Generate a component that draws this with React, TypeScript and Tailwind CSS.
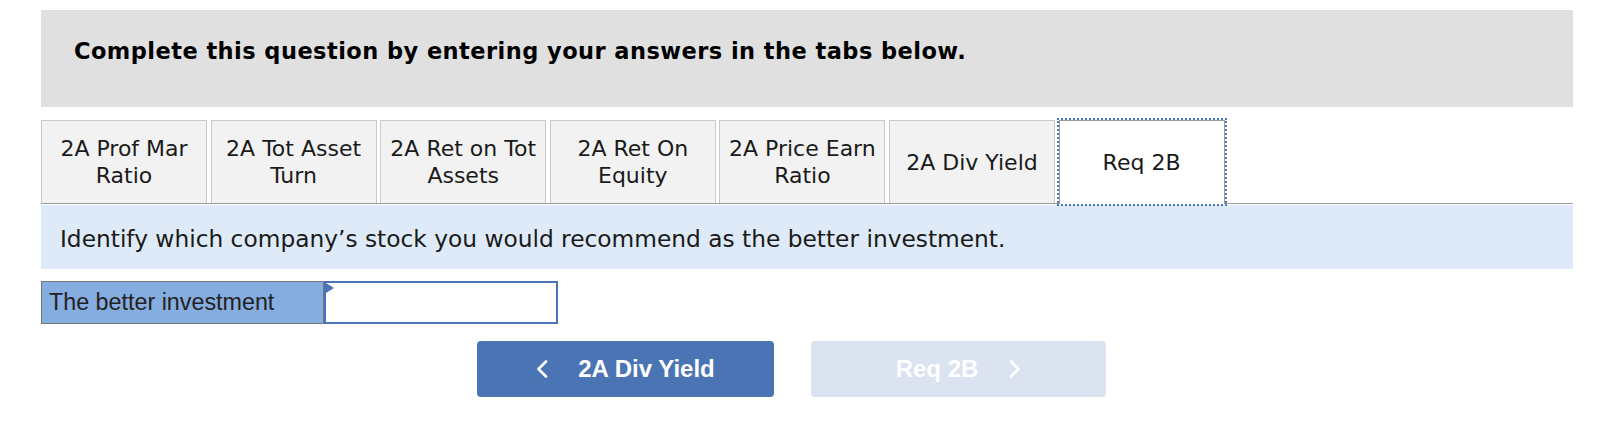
const tabs = [
  ["2A Prof Mar", "Ratio"],
  ["2A Tot Asset", "Turn"],
  ["2A Ret on Tot", "Assets"],
  ["2A Ret On", "Equity"],
  ["2A Price Earn", "Ratio"],
  ["2A Div Yield"],
]

const ChevronLeft = () => (
  <svg width="12" height="18" viewBox="0 0 12 18" fill="none">
    <polyline points="10,1.5 2.5,9 10,16.5" stroke="white" strokeWidth="2.6" strokeLinecap="round" strokeLinejoin="round" />
  </svg>
)

const ChevronRight = () => (
  <svg width="12" height="18" viewBox="0 0 12 18" fill="none">
    <polyline points="2,1.5 9.5,9 2,16.5" stroke="white" strokeWidth="2.6" strokeLinecap="round" strokeLinejoin="round" />
  </svg>
)

export default function App() {
  return (
    <div className="w-[1614px] h-[428px] bg-white pt-[10px] pl-[41px] font-['DejaVu_Sans',Verdana,sans-serif] text-[#1a1a1a]">
      <div className="w-[1532px]">
        {/* heading */}
        <div className="h-[97px] bg-[#e0e0e0] pl-[33px] pt-[26px]">
          <h2 className="text-[22.5px] tracking-[0.45px] font-bold text-black leading-[30px]">
            Complete this question by entering your answers in the tabs below.
          </h2>
        </div>

        {/* tabs */}
        <div className="mt-[13px] flex items-end gap-[3.6px] border-b border-[#9a9a9a]">
          {tabs.map((t, i) => (
            <div
              key={i}
              className="w-[166px] h-[83px] flex flex-col items-center justify-center bg-[#f2f2f2] border border-b-0 border-[#c9c9c9] text-[22px] leading-[27px] text-center"
            >
              {t.map((line, j) => (
                <span key={j}>{line}</span>
              ))}
            </div>
          ))}
          <div className="w-[166px] h-[84px] -mb-px flex items-center justify-center bg-white border border-b-0 border-[#9a9a9a] outline-2 outline-dotted outline-[#4a77bb] text-[22px]">
            Req 2B
          </div>
        </div>

        {/* instruction */}
        <div className="mt-px h-[64px] bg-[#deeaf7] flex items-center pl-[19px] pt-[4px] text-[23.3px]">
          Identify which company’s stock you would recommend as the better investment.
        </div>

        {/* answer row */}
        <div className="mt-[12px] flex h-[43px] font-['Liberation_Sans',Arial,sans-serif]">
          <div className="w-[283px] bg-[#86ade0] border border-[#777] pl-[7px] flex items-center text-[23.3px] text-[#222]">
            The better investment
          </div>
          <div className="relative w-[234px] bg-white border-2 border-[#4b74b6]">
            <span className="absolute left-0 top-0 w-0 h-0 border-t-[5px] border-b-[5px] border-l-[8px] border-t-transparent border-b-transparent border-l-[#4b74b6]" />
          </div>
        </div>

        {/* navigation */}
        <div className="mt-[17px] ml-[436px] flex gap-[37px] font-['Liberation_Sans',Arial,sans-serif] font-bold text-[24px] text-white">
          <button className="w-[297px] h-[56px] rounded-[4px] bg-[#4a74b3] flex items-center justify-center gap-[30px]">
            <ChevronLeft />
            <span>2A Div Yield</span>
          </button>
          <button className="w-[295px] h-[56px] rounded-[4px] bg-[#dae3ef] flex items-center justify-center gap-[31px]">
            <span>Req 2B</span>
            <ChevronRight />
          </button>
        </div>
      </div>
    </div>
  )
}
